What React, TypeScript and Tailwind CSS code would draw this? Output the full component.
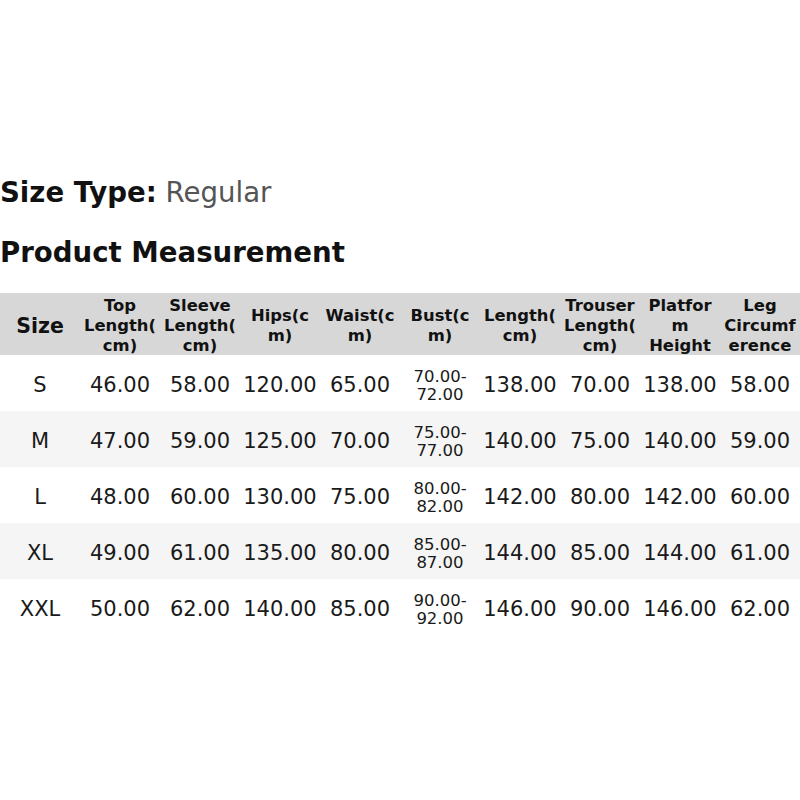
const headers: string[][] = [
  ['Size'],
  ['Top', 'Length(', 'cm)'],
  ['Sleeve', 'Length(', 'cm)'],
  ['Hips(c', 'm)'],
  ['Waist(c', 'm)'],
  ['Bust(c', 'm)'],
  ['Length(', 'cm)'],
  ['Trouser', 'Length(', 'cm)'],
  ['Platfor', 'm', 'Height'],
  ['Leg', 'Circumf', 'erence'],
];

const rows = [
  { size: 'S', top: '46.00', sleeve: '58.00', hips: '120.00', waist: '65.00', bust: ['70.00-', '72.00'], length: '138.00', trouser: '70.00', platform: '138.00', leg: '58.00' },
  { size: 'M', top: '47.00', sleeve: '59.00', hips: '125.00', waist: '70.00', bust: ['75.00-', '77.00'], length: '140.00', trouser: '75.00', platform: '140.00', leg: '59.00' },
  { size: 'L', top: '48.00', sleeve: '60.00', hips: '130.00', waist: '75.00', bust: ['80.00-', '82.00'], length: '142.00', trouser: '80.00', platform: '142.00', leg: '60.00' },
  { size: 'XL', top: '49.00', sleeve: '61.00', hips: '135.00', waist: '80.00', bust: ['85.00-', '87.00'], length: '144.00', trouser: '85.00', platform: '144.00', leg: '61.00' },
  { size: 'XXL', top: '50.00', sleeve: '62.00', hips: '140.00', waist: '85.00', bust: ['90.00-', '92.00'], length: '146.00', trouser: '90.00', platform: '146.00', leg: '62.00' },
];

function Cell({ children }: { children: React.ReactNode }) {
  return (
    <div className="flex items-center justify-center pt-[6px] text-center text-[21px] text-[#1a1a1a] whitespace-nowrap">
      {children}
    </div>
  );
}

export default function App() {
  return (
    <div className="w-[800px] h-[800px] bg-white pt-[175px] font-['DejaVu_Sans',sans-serif]">
      <div className="text-[27.6px] leading-[36px]">
        <span className="font-bold text-[#111]">Size Type:</span>{' '}
        <span className="text-[#555]">Regular</span>
      </div>
      <div className="mt-[24px] text-[27.6px] leading-[36px] font-bold text-[#111]">Product Measurement</div>

      <div className="mt-[22px]">
        <div className="grid grid-cols-10 h-[62px] bg-[#d7d7d7]">
          {headers.map((lines, i) => (
            <div
              key={i}
              className={
                i === 0
                  ? 'flex items-center justify-center pt-[3px] text-[20.5px] font-bold text-[#111]'
                  : 'flex flex-col items-center justify-center pt-[3px] text-center text-[16.4px] leading-[20px] font-bold text-[#111] whitespace-nowrap'
              }
            >
              {lines.map((l, j) => (
                <span key={j}>{l}</span>
              ))}
            </div>
          ))}
        </div>
        {rows.map((r, i) => (
          <div key={r.size} className={`grid grid-cols-10 h-[56px] ${i % 2 === 1 ? 'bg-[#f5f5f5]' : 'bg-white'}`}>
            <Cell>{r.size}</Cell>
            <Cell>{r.top}</Cell>
            <Cell>{r.sleeve}</Cell>
            <Cell>{r.hips}</Cell>
            <Cell>{r.waist}</Cell>
            <div className="flex flex-col items-center justify-center pt-[6px] text-center text-[16.5px] leading-[18px] text-[#1a1a1a]">
              <span>{r.bust[0]}</span>
              <span>{r.bust[1]}</span>
            </div>
            <Cell>{r.length}</Cell>
            <Cell>{r.trouser}</Cell>
            <Cell>{r.platform}</Cell>
            <Cell>{r.leg}</Cell>
          </div>
        ))}
      </div>
    </div>
  );
}
